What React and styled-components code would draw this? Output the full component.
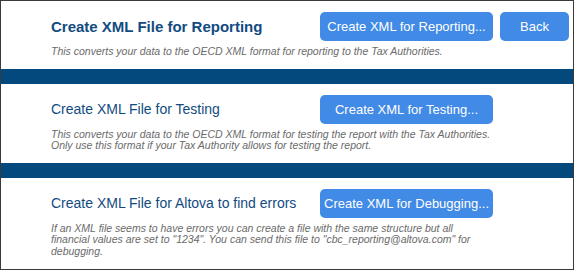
import styled, { createGlobalStyle } from "styled-components";

const GlobalStyle = createGlobalStyle`
  html, body {
    margin: 0;
    padding: 0;
    background: #ffffff;
  }

  * {
    box-sizing: border-box;
  }
`;

const sections = [
  {
    title: "Create XML File for Reporting",
    strong: true,
    button: "Create XML for Reporting...",
    back: true,
    lines: ["This converts your data to the OECD XML format for reporting to the Tax Authorities."],
  },
  {
    title: "Create XML File for Testing",
    button: "Create XML for Testing...",
    lines: [
      "This converts your data to the OECD XML format for testing the report with the Tax Authorities.",
      "Only use this format if your Tax Authority allows for testing the report.",
    ],
  },
  {
    title: "Create XML File for Altova to find errors",
    button: "Create XML for Debugging...",
    lines: [
      "If an XML file seems to have errors you can create a file with the same structure but all",
      'financial values are set to "1234". You can send this file to "cbc_reporting@altova.com" for',
      "debugging.",
    ],
  },
];

export default function App() {
  return (
    <>
      <GlobalStyle />
      <Frame>
        {sections.map((section, i) => (
          <Block key={section.title} $last={i === sections.length - 1}>
            {i > 0 && <Band />}
            <Section>
              <Row>
                <Title $strong={section.strong}>{section.title}</Title>
                <Button $wide>{section.button}</Button>
                {section.back && <Button>Back</Button>}
              </Row>
              <Description>
                {section.lines.map((line) => (
                  <span key={line}>{line}</span>
                ))}
              </Description>
            </Section>
          </Block>
        ))}
      </Frame>
    </>
  );
}

const Frame = styled.main`
  width: 574px;
  height: 270px;
  border: 1px solid #3a3a3a;
  background: #ffffff;
  display: flex;
  flex-direction: column;
  font-family: "Liberation Sans", Arial, sans-serif;
`;

const Block = styled.div`
  display: flex;
  flex-direction: column;
  flex: ${(p) => (p.$last ? 1 : "0 0 auto")};
`;

const Band = styled.div`
  height: 15px;
  background: #03497e;
`;

const Section = styled.section`
  padding: 11px 0 11px 50px;
  display: flex;
  flex-direction: column;
  gap: 5px;
`;

const Row = styled.div`
  display: flex;
  align-items: center;
  gap: 7px;
`;

const Title = styled.h2`
  margin: 0;
  flex: 0 0 262px;
  font-size: ${(p) => (p.$strong ? "15px" : "14px")};
  font-weight: ${(p) => (p.$strong ? 700 : 400)};
  color: #124b7f;
  white-space: nowrap;
`;

const Button = styled.button`
  width: ${(p) => (p.$wide ? "173px" : "69px")};
  height: 29px;
  padding: 0;
  border: 0;
  border-radius: 5px;
  background: #418ae6;
  color: #ffffff;
  font-family: "Liberation Sans", Arial, sans-serif;
  font-size: 13px;
  white-space: nowrap;
  text-align: center;
  cursor: pointer;
`;

const Description = styled.p`
  margin: 0;
  display: flex;
  flex-direction: column;
  font-size: 10.5px;
  line-height: 11.6px;
  font-style: italic;
  color: #6a6a6a;
  white-space: nowrap;
`;
